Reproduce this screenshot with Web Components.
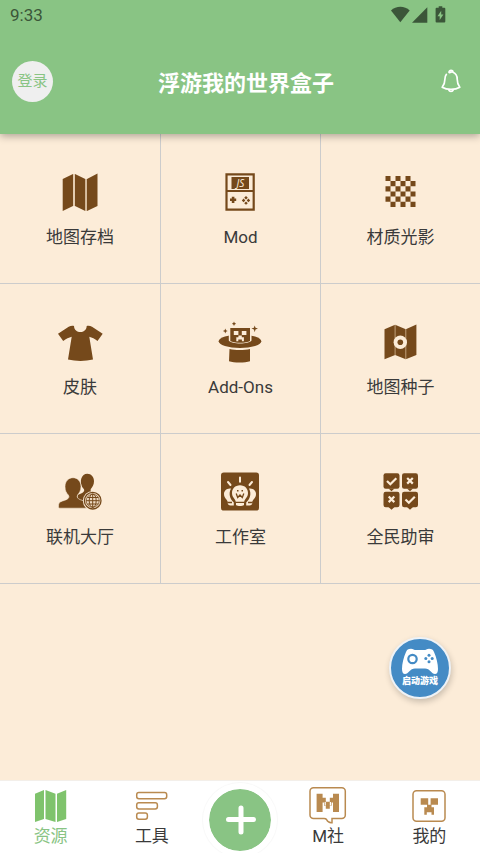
<!DOCTYPE html>
<html lang="zh-CN">
<head>
<meta charset="utf-8">
<meta name="viewport" content="width=device-width, initial-scale=1">
<title>浮游我的世界盒子</title>
<style>
html, body { height: 100%; margin: 0; }
body { font-family: Roboto, "Noto Sans CJK SC", sans-serif; color: #3a3a3a; }
</style>
</head>
<body>
<box-app></box-app>

<template id="t-app">
<style>
:host { display: flex; flex-direction: column; min-height: 100vh; background: #fcecd8; overflow: hidden;
  --green: #89c484; --brown: #75491b; --paper: #fcecd8; --line: #cccccc; --tan: #b98a50; }
main { flex: 1; position: relative; }
.grid { display: grid; grid-template-columns: repeat(3, 1fr); }
launch-button { position: absolute; right: 29px; bottom: 81px; }
.b { fill: var(--brown); }
.p { fill: var(--paper); }
.ps { fill: none; stroke: var(--paper); }
.t { fill: none; stroke: var(--tan); }
</style>
<app-header heading="浮游我的世界盒子"></app-header>
<main>
  <nav class="grid" aria-label="资源">
    <menu-tile label="地图存档">
      <svg width="48" height="48" viewBox="0 0 48 48"><path class="b" d="M6.7 11 17 6v32L6.700 43zM19 6l10.300 5v32L19 38zM31 11l10.500-5.500V38L31 43z"/><path stroke="#c9aa86" d="M18 6v32M30.200 11v32"/></svg>
    </menu-tile>
    <menu-tile label="Mod" bordered>
      <svg width="48" height="48" viewBox="0 0 48 48"><path fill="none" stroke="#75491b" stroke-width="2.200" d="M10.500 6.400h27.200v35.200H10.500zM10.500 23h27.200"/><path class="b" d="M15.500 9h17.500v12H15.500z"/><text x="24.300" y="18.700" text-anchor="middle" font-family="Noto Sans, sans-serif" font-size="10" font-style="italic" fill="#fcecd8">JS</text><path class="b" d="M15.800 28.800h2.600v1.700h1.800v2.600h-1.800v1.800h-2.600v-1.800H14v-2.600h1.800zM30 28l1.800 1.800L30 31.400l-1.800-1.600zM30 33.400l1.800 1.800L30 36.800l-1.800-1.600zM27.600 30.600l1.700 1.800-1.700 1.800-1.800-1.800zM32.400 30.600l1.800 1.800-1.800 1.800-1.700-1.800z"/></svg>
    </menu-tile>
    <menu-tile label="材质光影" bordered>
      <svg width="48" height="48" viewBox="0 0 48 48"><path class="b" d="M9.500 8h5v5h-5zM19.500 8h5v5h-5zM29.500 8h5v5h-5zM14.500 13h5v5.200h-5zM24.500 13h5v5.200h-5zM34.500 13h5v5.200h-5zM9.500 18.200h5v5.200h-5zM19.500 18.200h5v5.200h-5zM29.500 18.200h5v5.200h-5zM14.500 23.400h5v5.200h-5zM24.500 23.400h5v5.200h-5zM34.500 23.400h5v5.200h-5zM9.500 28.600h5v5.200h-5zM19.500 28.600h5v5.200h-5zM29.500 28.600h5v5.200h-5zM14.500 33.800h5V39h-5zM24.500 33.800h5V39h-5zM34.500 33.800h5V39h-5z"/></svg>
    </menu-tile>
    <menu-tile label="皮肤">
      <svg width="48" height="48" viewBox="0 0 48 48"><path class="b" d="M18 8c.3 8 12.400 8 12.700 0 2-.4 4 0 5.300.8L46.700 15.700 41.500 23c-2.700-2-5.500-3.700-8.200-4.300L37 41.600c-8 1.800-17 1.800-25 0l3.700-22.900C13 19.300 10 21 7.200 23L2 15.700 12.700 8.800C14.500 8 16 7.600 18 8z"/></svg>
    </menu-tile>
    <menu-tile label="Add-Ons" bordered>
      <svg width="48" height="48" viewBox="0 0 48 48"><ellipse class="b" cx="24" cy="23.300" rx="21.300" ry="6.700"/><path class="p" d="M12.800 14v8.500c2.500 4 20.200 4 22.700 0V14z"/><path class="b" d="M14.300 10H34v13c-3.500 2.400-16.200 2.400-19.700 0z"/><path class="p" d="M17.800 13h4.600v4h-4.600zM25.800 13h4.600v4h-4.600zM22.400 17.500h3.400v1.700h2.100v4h-2v-1.700h-3.600v1.700h-2v-4h2.100z"/><path class="b" d="M13.500 31c5.500 1.400 15 1.400 20.500 0v12.300c-5 1.700-16 1.700-21 0zM9.300 10.600l.7 1.700 1.700.7-1.700.7-.7 1.700-.7-1.700-1.700-.7 1.700-.7zM18 3.600l.7 1.500 1.500.7-1.500.7-.7 1.500-.7-1.500-1.500-.7 1.500-.7zM38.700 7.500l.8 2.300 2.500.8-2.500.9-.8 2.700-.8-2.700-2.500-.9 2.500-.8z"/></svg>
    </menu-tile>
    <menu-tile label="地图种子" bordered>
      <svg width="48" height="48" viewBox="0 0 48 48"><path class="b" d="M8.500 11.200l10.600-4.500 10.700 4.500L40.400 6.500V37l-10.600 4.200L19.100 37 8.500 41.200z"/><path stroke="#c9aa86" stroke-width=".9" d="M19.100 7v30M29.800 11v30"/><circle class="p" cx="24.300" cy="24.200" r="6.700"/><circle class="b" cx="24.300" cy="24.200" r="2.800"/></svg>
    </menu-tile>
    <menu-tile label="联机大厅">
      <svg width="48" height="48" viewBox="0 0 48 48"><path class="b" d="M31.300 5.800c4 0 6.700 3.200 6.700 7.500 0 3.500-1.700 6-3.200 7.700-.8 1.800.2 3 2.700 3.700L42 28v6H22l-.5-7c3.500-1.400 6.500-2.600 6.700-4.500.1-1.500-1-2-2-3.500-3-5.500-.8-13.200 5.100-13.200z"/><path fill="#75491b" stroke="#fcecd8" stroke-width=".6" d="M17 9.700c4.700 0 8 3.800 8 8.800 0 4.500-2 6.700-3.400 8.500-1 2.200 0 3.700 2.700 4.700 4.200 1.500 8 2.500 8.500 8.500H3.500c-1.300 0-1.200-3.500-.5-5 1.200-2 5.500-2.600 7.800-3.800 2.200-1.200 2.700-2.800 1.500-4.400C10.500 25 9 23 9 18.500c0-5 3.300-8.800 8-8.800z"/><circle class="p" cx="36.700" cy="32.700" r="9.800"/><circle cx="36.700" cy="32.700" r="8.300" fill="#eedac2" stroke="#75491b" stroke-width="1.300"/><g fill="none" stroke="#75491b" stroke-width="1"><circle cx="36.700" cy="32.700" r="6.500" stroke-width=".7"/><path d="M36.700 26v13.500M30 32.700h13.500M31.300 29.500h11M31.300 36h11"/><ellipse cx="36.700" cy="32.700" rx="3.500" ry="6.700"/></g></svg>
    </menu-tile>
    <menu-tile label="工作室" bordered>
      <svg width="48" height="48" viewBox="0 0 48 48"><rect class="b" x="5" y="4.600" width="38" height="38" rx="2.800"/><g stroke="#fcecd8" stroke-width="2" stroke-linecap="round"><path d="M24 9.500v4.300M12 14l2.500 3M36 14l-2.500 3"/></g><path class="p" d="M15 20.500c-4.500-.7-7 2.500-7 5.500 0 4.500 3.500 5.500 3.800 8.200v1.500c1 2.300 4.500 2 6 1.700V34.500c-4-3.500-5.500-9-2.800-14zM33 20.500c4.500-.7 7 2.500 7 5.500 0 4.500-3.500 5.500-3.800 8.200v1.500c-1 2.300-4.500 2-6 1.700V34.500c4-3.500 5.500-9 2.800-14zM24 17.300c5 0 8 3.600 8 7.700 0 4.700-3.500 5.500-4 9.500v2.500c-1.800 1.400-6.200 1.400-8 0v-2.500c-.5-4-4-4.800-4-9.500 0-4.100 3-7.700 8-7.700z"/><path fill="none" stroke="#75491b" stroke-width="1.300" d="M20.200 25.500l1.500 4 2.300-2.500 2.300 2.500 1.500-4M11.500 34.500h4.500M32 34.500h4.500M20 34.300h8"/><path class="b" d="M21 22h1.500v1.500H21zM25.500 22H27v1.500h-1.500z"/></svg>
    </menu-tile>
    <menu-tile label="全民助审" bordered>
      <svg width="48" height="48" viewBox="0 0 48 48"><g class="b"><rect x="7.500" y="5.300" width="16" height="15.400" rx="2.200"/><rect x="26" y="5.300" width="16" height="15.400" rx="2.200"/><rect x="7.500" y="23.800" width="16" height="15.400" rx="2.200"/><rect x="26" y="23.800" width="16" height="15.400" rx="2.200"/><path d="M12.500 20.500h6l-3 2.700zM31 20.500h6l-3 2.700zM12.500 39h6l-3 2.700zM31 39h6l-3 2.700z"/></g><g class="ps" stroke-width="2.200"><path d="M11 13l3.300 3.200 6-6M29.500 31.500l3.300 3.200 6-6"/><path d="M31.200 10l5.600 5.600M36.800 10l-5.600 5.600M12.700 28.500l5.600 5.600M18.300 28.500l-5.600 5.600"/></g></svg>
    </menu-tile>
  </nav>
  <launch-button></launch-button>
</main>
<tab-bar>
  <tab-item label="资源" active>
    <svg width="40" height="40" viewBox="0 0 40 40"><path fill="#7fc36c" d="M4 9.700L13 6v29l-9 3zM14.500 6l10 3.700V38l-10-3zM26 9.700L35.200 6v29L26 38z"/></svg>
  </tab-item>
  <tab-item label="工具">
    <svg width="40" height="40" viewBox="0 0 40 40"><g class="t" stroke-width="1.500"><rect x="4.700" y="8.500" width="30" height="6.300" rx="2.200"/><rect x="4.700" y="18.700" width="20.700" height="6.300" rx="2.200"/><rect x="4.700" y="29" width="10.700" height="6.300" rx="2.200"/></g></svg>
  </tab-item>
  <add-button slot="center"></add-button>
  <tab-item label="M社" slot="end">
    <svg width="40" height="40" viewBox="0 0 40 40"><path class="t" stroke-width="1.500" d="M16 34.500H5.500A3.500 3.500 0 0 1 2 31V7.300a3.500 3.500 0 0 1 3.500-3.500h28.300a3.500 3.500 0 0 1 3.500 3.500V31a3.500 3.500 0 0 1-3.500 3.500H24v4.300c-2 .3-4.500-1.300-5.500-3.300-.5-.8-1.200-1-2.500-1z"/><path fill="#b98a50" d="M8.600 9.700h6v4h3.200v4h4v-4H25v-4h6V28h-6v-9.500h-1.400v3.300h-1.800v3h-4v-3H16v-3.300h-1.400V28h-6z"/><path fill="#fff" d="M16.600 18h1.200v3.500h-1.200zM21.800 18H23v3.500h-1.200z"/></svg>
  </tab-item>
  <tab-item label="我的" slot="end">
    <svg width="40" height="40" viewBox="0 0 40 40"><rect class="t" stroke-width="1.500" x="4" y="6.700" width="32" height="30.500" rx="3.500"/><path fill="#b98a50" d="M11.700 14.200h7.500v6.500h2.400v-6.500H29v6.500h-6.500v2.600H25v7.500h-2.500v-2.500h-4.700v2.500h-2.500v-7.500H18v-2.600h-6.300z"/></svg>
  </tab-item>
</tab-bar>
</template>

<template id="t-header">
<style>
:host { display: block; background: #89c484; box-shadow: 0 2px 8px rgba(0,0,0,.32); position: relative; z-index: 1; }
.status { display: flex; align-items: center; justify-content: space-between; height: 28px; padding: 0 34px 0 10px; color: #3b5639; font-size: 17px; line-height: 24px; }
.status span { padding-top: 2px; }
.bar { display: flex; align-items: center; height: 106px; padding: 0 17px 0 12px; }
h1 { flex: 1; margin: 0; padding-top: 6px; font-size: 22px; line-height: 32px; font-weight: 700; color: #fff; text-align: center; }
button { border: 0; padding: 0; background: none; font: inherit; cursor: pointer; }
.login { width: 41px; height: 41px; padding-bottom: 4px; border-radius: 50%; background: #efefef; color: #89c484; font-size: 15px; white-space: nowrap; }
.bell { display: flex; justify-content: center; width: 24px; }
</style>
<div class="status"><span>9:33</span>
<svg width="56" height="18" viewBox="0 0 56 18" fill="#3b5639" aria-hidden="true"><path d="M1 5.500c5-5 13.700-5 18.700 0L10.300 17.300z"/><path d="M37.300 2.300v15.400H22z"/><path fill-rule="evenodd" d="M48.700 1.300h3.600v1.500h2a1 1 0 0 1 1 1v12.700a1 1 0 0 1-1 1h-7.700a1 1 0 0 1-1-1V3.800a1 1 0 0 1 1-1h2.100zM51.200 5.700l-3.700 5.600h2.200v3.800l3.700-5.600h-2.200z"/></svg></div>
<div class="bar">
<button class="login" type="button">登录</button>
<h1></h1>
<button class="bell" type="button" aria-label="通知"><svg width="20" height="24" viewBox="0 0 20 24" fill="none" stroke="#fff" stroke-width="1.700" stroke-linecap="round" stroke-linejoin="round"><path d="M8 3.300c0-2.700 4-2.700 4 0 3 1.200 4.200 3.700 4.200 7 0 3.500.8 5.700 2.600 8-4.600 2.800-13 2.800-17.600 0 1.900-2.300 2.700-4.500 2.700-8 0-2.200.5-3.700 1.500-5M7.800 21c.6 2 3.800 2 4.400 0M8.500 3.700l2-.7"/></svg></button>
</div>
</template>

<template id="t-tile">
<style>
:host { display: block; border-bottom: 1px solid var(--line); }
:host([bordered]) { border-left: 1px solid var(--line); }
a { display: flex; flex-direction: column; align-items: center; gap: 9px; padding: 34px 0; color: #3a3a3a; text-decoration: none; font-size: 17px; line-height: 24px; }
::slotted(svg) { display: block; }
:host([bordered]) ::slotted(svg) { margin-right: 1px; }
</style>
<a href="#"><slot></slot><span></span></a>
</template>

<template id="t-launch">
<style>
:host { display: block; }
button { display: flex; flex-direction: column; align-items: center; width: 62px; height: 62px; padding: 9px 0 0; border: 2px solid #eef2f6; border-radius: 50%; background: #448bc5; box-shadow: 1px 3px 6px rgba(0,0,0,.2); color: #fff; font: 900 9px/12px Roboto, "Noto Sans CJK SC", sans-serif; white-space: nowrap; cursor: pointer; box-sizing: border-box; }
</style>
<button type="button"><svg width="38" height="27" viewBox="0 0 38 27" aria-hidden="true"><path fill="#fff" d="M10 .8c2 0 2.500 1.200 4 1.200h10c1.500 0 2-1.200 4-1.200 3 0 4 1 5 3.200 2.500 5.500 4 12 4 17 0 3-1 5-3 5-3.500 0-5-5.500-10-5.500H14c-5 0-6.500 5.500-10 5.500-2 0-3-2-3-5C1 16 2.500 9.500 5 4 6 1.800 7 .8 10 .8z"/><circle cx="11.500" cy="11" r="4.200" fill="none" stroke="#448bc5" stroke-width="2.200"/><g fill="#448bc5"><circle cx="28" cy="7.300" r="1.500"/><circle cx="28" cy="13.700" r="1.500"/><circle cx="24.800" cy="10.500" r="1.500"/><circle cx="31.200" cy="10.500" r="1.500"/></g></svg><span>启动游戏</span></button>
</template>

<template id="t-tabs">
<style>
:host { display: block; background: #fff; border-top: 1px solid #f3efea; }
nav { display: grid; grid-template-columns: 1fr 75px 1fr; height: 72px; }
.side { display: flex; background: linear-gradient(#fff, #eee) bottom / 100% 3px no-repeat; }
.side:first-child { margin-left: 32px; }
.side:last-child { margin-right: 32px; }
.side:first-child ::slotted(:first-child) { margin-left: -32px; }
.side:last-child ::slotted(:last-child) { margin-right: -32px; }
::slotted(tab-item) { flex: 1; }
</style>
<nav aria-label="主导航"><div class="side"><slot></slot></div><slot name="center"></slot><div class="side"><slot name="end"></slot></div></nav>
</template>

<template id="t-tab">
<style>
:host { display: block; }
a { display: flex; flex-direction: column; align-items: center; padding-top: 3px; color: #3a3a3a; text-decoration: none; font-size: 17px; line-height: 24px; }
:host([active]) a { color: #89c484; }
::slotted(svg) { display: block; }
</style>
<a href="#"><slot></slot><span></span></a>
</template>

<template id="t-add">
<style>
:host { display: flex; justify-content: center; padding-top: 2px; }
button { flex: none; width: 74px; height: 74px; padding: 0; border: 6px solid #fff; border-radius: 50%; background: #89c484; background-clip: padding-box; box-shadow: 0 0 1px 1px #f8f8f8; cursor: pointer; display: flex; align-items: center; justify-content: center; box-sizing: border-box; }
</style>
<button type="button" aria-label="添加"><svg width="32" height="32" viewBox="0 0 32 32" stroke="#fff" stroke-width="5" stroke-linecap="round"><path d="M17 4v24M4.500 15.500h25"/></svg></button>
</template>

<script>
class Base extends HTMLElement {
  connectedCallback() {
    if (this.shadowRoot) return;
    const root = this.attachShadow({ mode: "open" });
    root.append(document.getElementById(this.constructor.template).content.cloneNode(true));
    this.fill(root);
  }
  fill() {}
}
class AppHeader extends Base {
  static template = "t-header";
  fill(root) { root.querySelector("h1").textContent = this.getAttribute("heading"); }
}
class Labelled extends Base {
  fill(root) { root.querySelector("a > span").textContent = this.getAttribute("label"); }
}
class MenuTile extends Labelled { static template = "t-tile"; }
class TabItem extends Labelled {
  static template = "t-tab";
  fill(root) {
    super.fill(root);
    if (this.hasAttribute("active")) root.querySelector("a").setAttribute("aria-current", "page");
  }
}
class LaunchButton extends Base { static template = "t-launch"; }
class AddButton extends Base { static template = "t-add"; }
class TabBar extends Base { static template = "t-tabs"; }
class BoxApp extends Base { static template = "t-app"; }
customElements.define("app-header", AppHeader);
customElements.define("menu-tile", MenuTile);
customElements.define("launch-button", LaunchButton);
customElements.define("tab-item", TabItem);
customElements.define("add-button", AddButton);
customElements.define("tab-bar", TabBar);
customElements.define("box-app", BoxApp);
</script>
</body>
</html>
